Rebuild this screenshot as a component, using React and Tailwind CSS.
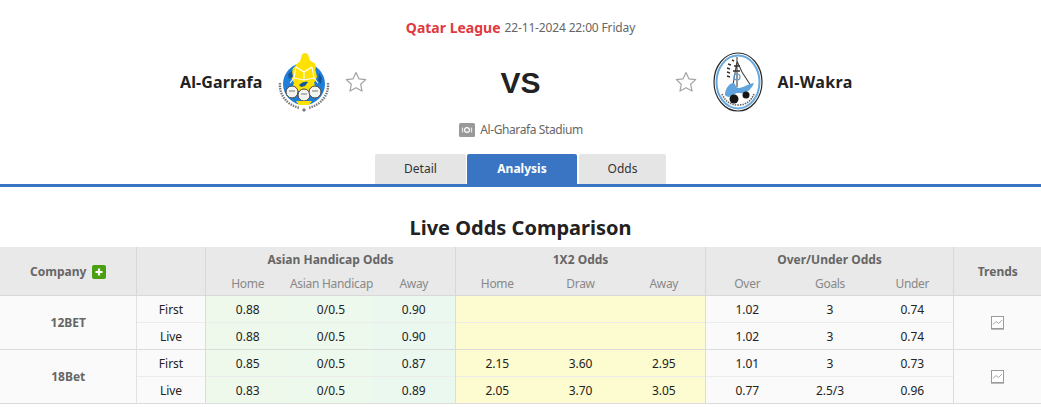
const font = { fontFamily: 'Tahoma, "Noto Sans", sans-serif' }

const rows = [
  {
    company: '12BET',
    lines: [
      { type: 'First', ah: ['0.88', '0/0.5', '0.90'], x12: ['', '', ''], ou: ['1.02', '3', '0.74'] },
      { type: 'Live', ah: ['0.88', '0/0.5', '0.90'], x12: ['', '', ''], ou: ['1.02', '3', '0.74'] },
    ],
  },
  {
    company: '18Bet',
    lines: [
      { type: 'First', ah: ['0.85', '0/0.5', '0.87'], x12: ['2.15', '3.60', '2.95'], ou: ['1.01', '3', '0.73'] },
      { type: 'Live', ah: ['0.83', '0/0.5', '0.89'], x12: ['2.05', '3.70', '3.05'], ou: ['0.77', '2.5/3', '0.96'] },
    ],
  },
]

function Star() {
  return (
    <svg width="22" height="22" viewBox="0 0 22 22" className="shrink-0">
      <path
        d="M11 1.500l2.900 6.300 6.800.8-5 4.700 1.300 6.800-6-3.400-6 3.400 1.300-6.800-5-4.700 6.800-.8z"
        fill="#fff"
        stroke="#a3a3a3"
        strokeWidth="1.2"
        strokeLinejoin="round"
      />
    </svg>
  )
}

function GarrafaLogo() {
  return (
    <svg width="52" height="62" viewBox="0 0 52 62" className="shrink-0">
      <circle cx="26" cy="33" r="21" fill="#1f7fd8" />
      <path d="M15 17l6-4h10l6 4 2 9-3 6 3 8H13l3-8-3-6z" fill="#fde100" />
      <path d="M24 3.500q3-3 6 0l2 6 5 3 1 5-10 1-12-1 2-4 4-3z" fill="#fde100" />
      <path d="M18 16l8 5 8-5M26 21v8M26 29l-10-2-4 5M26 29l10-2 4 5M16 27l2-11M36 27l-2-11" fill="none" stroke="#fff" strokeWidth="1.1" />
      <path d="M10 23l4-3 1 6-4 2zM41 22l3 5-1 6-3-3z" fill="#14559e" />
      <path d="M21 34c3-3 6-4 9-3l-3 4-4 1z" fill="#14559e" />
      <circle cx="14" cy="41" r="6" fill="#f4f4f0" stroke="#444" strokeWidth="1" />
      <circle cx="26" cy="44" r="6" fill="#f4f4f0" stroke="#444" strokeWidth="1" />
      <circle cx="37" cy="41" r="6" fill="#f4f4f0" stroke="#444" strokeWidth="1" />
      <path d="M11 40h6M23 43h6M34 40h6" stroke="#777" strokeWidth="1" />
      <path d="M2 32c-1 11 6 22 20 25M50 32c1 11-6 22-20 25" fill="none" stroke="#777" strokeWidth="2.400" strokeDasharray="1.5 1" />
      <path d="M18 50h16l-3 4H21z" fill="#fde100" />
      <path d="M26 57l2 2-2 2-2-2z" fill="#777" />
    </svg>
  )
}

function WakraLogo() {
  return (
    <svg width="50" height="60" viewBox="0 0 50 60" className="shrink-0">
      <ellipse cx="25" cy="30" rx="24" ry="29" fill="#fff" stroke="#2b2b2b" strokeWidth="1.2" />
      <ellipse cx="25" cy="30" rx="21.500" ry="26.500" fill="#fff" stroke="#69a8dc" strokeWidth="2" />
      <path d="M24 5v30M20 33l4-24 5 11 9 14" fill="none" stroke="#444" strokeWidth="1.1" />
      <path d="M15 12l3 1M14 16l3 1M14 20l3 1M14 24l3 1M19 8l2 1M21 14h6M20 19h7" stroke="#333" strokeWidth="1.4" />
      <circle cx="24" cy="25" r="3" fill="none" stroke="#5b9bd0" strokeWidth="1.2" />
      <path d="M12 43c0-5 3-11 8-12 3 0 2 5 6 5 4 0 8-4 15-5-1 3-5 9-10 10-4 1-7-1-9 1-3 2-6 5-10 1z" fill="#5fa4dc" />
      <circle cx="21" cy="47" r="4.500" fill="#161616" />
      <circle cx="33" cy="43" r="3.500" fill="#161616" />
      <path d="M9 42c3 7 8 11 16 11s13-4 16-11" fill="none" stroke="#666" strokeWidth="1.6" strokeDasharray="1.5 1" />
    </svg>
  )
}

function StadiumIcon() {
  return (
    <svg width="16" height="14" viewBox="0 0 16 14" className="shrink-0">
      <rect width="16" height="14" rx="1.500" fill="#999" />
      <circle cx="8" cy="7" r="2.400" fill="none" stroke="#fff" strokeWidth="1.2" />
      <path d="M3.500 4.500v5M12.500 4.500v5" stroke="#e6e6e6" strokeWidth="1.2" />
    </svg>
  )
}

function TrendIcon() {
  return (
    <svg width="13" height="14" viewBox="0 0 13 14" className="mx-auto block">
      <rect x="0.500" y="0.500" width="12" height="12" fill="#fff" stroke="#9a9a9a" />
      <path d="M0 13.500h13" stroke="#bbb" />
      <path d="M2 8.500l3-3 2.500 2L11 4" fill="none" stroke="#a9a3ad" strokeWidth="1" />
    </svg>
  )
}

function Team({ name, logo, reverse }) {
  return (
    <div className={`flex items-center ${reverse ? 'justify-start' : 'justify-end'}`}>
      {reverse ? (
        <>
          <Star />
          <div className="ml-[16px]">{logo}</div>
          <span className="ml-[15px] text-[16px] font-bold tracking-[0.4px] text-[#222]">{name}</span>
        </>
      ) : (
        <>
          <span className="mr-[15px] text-[16px] font-bold tracking-[0.1px] text-[#222]">{name}</span>
          <div className="mr-[15px]">{logo}</div>
          <Star />
        </>
      )}
    </div>
  )
}

export default function App() {
  return (
    <div className="h-[407px] w-[1041px] overflow-hidden bg-white text-[12px]" style={font}>
      <div className="flex h-[43px] items-end justify-center pb-[6px]">
        <span className="text-[14px] leading-[18px] font-bold text-[#e0393e]">Qatar League</span>
        <span className="ml-[4px] leading-[18px] tracking-[-0.15px] text-[#666]">22-11-2024 22:00 Friday</span>
      </div>

      <div className="grid h-[78px] grid-cols-[1fr_40px_1fr] items-center gap-[134px]">
        <Team name="Al-Garrafa" logo={<GarrafaLogo />} />
        <div className="text-center text-[30px] font-bold text-[#222]" style={{ fontFamily: '"Liberation Sans", sans-serif' }}>
          VS
        </div>
        <Team name="Al-Wakra" logo={<WakraLogo />} reverse />
      </div>

      <div className="flex h-[18px] items-center justify-center gap-[5px] pl-[1px] tracking-[-0.4px] text-[#666]">
        <StadiumIcon />
        <span>Al-Gharafa Stadium</span>
      </div>

      <div className="mt-[15px] flex h-[33px] justify-center border-b-[3px] border-[#3a75c4]">
        <div className="flex w-[91px] items-center justify-center rounded-t-[2px] bg-[#e5e5e5] text-[#333]">Detail</div>
        <div className="ml-[1px] flex w-[110px] items-center justify-center rounded-t-[2px] bg-[#3a75c4] font-bold text-white">Analysis</div>
        <div className="ml-[2px] flex w-[87px] items-center justify-center rounded-t-[2px] bg-[#e5e5e5] text-[#333]">Odds</div>
      </div>

      <h2 className="mt-[27px] h-[33px] text-center text-[20px] leading-[28px] font-bold text-[#222]">Live Odds Comparison</h2>

      <table className="w-[1041px] table-fixed border-collapse text-center [&_td]:pt-[2px] [&_td]:pl-[1px] [&_th]:pt-[2px] [&_th]:pl-[1px]">
        <colgroup>
          <col className="w-[136px]" />
          <col className="w-[69px]" />
          <col className="w-[84px]" />
          <col className="w-[83px]" />
          <col className="w-[83px]" />
          <col className="w-[83px]" />
          <col className="w-[84px]" />
          <col className="w-[83px]" />
          <col className="w-[83px]" />
          <col className="w-[83px]" />
          <col className="w-[82px]" />
          <col className="w-[88px]" />
        </colgroup>
        <thead className="bg-[#e9e9e9] font-bold text-[#666]">
          <tr className="h-[24px]">
            <th rowSpan={2} className="border-r border-b border-[#d8d8d8]">
              <span className="inline-flex items-center gap-[6px]">
                Company
                <span className="flex h-[14px] w-[14px] items-center justify-center rounded-[2px] bg-[#4a9f13]">
                  <svg width="10" height="10" viewBox="0 0 10 10">
                    <path d="M5 1.500v7M1.500 5h7" stroke="#fff" strokeWidth="2.2" />
                  </svg>
                </span>
              </span>
            </th>
            <th rowSpan={2} className="border-r border-b border-[#d8d8d8]" />
            <th colSpan={3} className="border-r border-[#d8d8d8]">Asian Handicap Odds</th>
            <th colSpan={3} className="border-r border-[#d8d8d8]">1X2 Odds</th>
            <th colSpan={3} className="border-r border-[#d8d8d8]">Over/Under Odds</th>
            <th rowSpan={2} className="border-b border-[#d8d8d8]">Trends</th>
          </tr>
          <tr className="h-[24px] border-b border-[#d8d8d8] font-normal tracking-[-0.3px] whitespace-nowrap text-[#888]">
            <td>Home</td>
            <td>Asian Handicap</td>
            <td className="border-r border-[#d8d8d8]">Away</td>
            <td>Home</td>
            <td>Draw</td>
            <td className="border-r border-[#d8d8d8]">Away</td>
            <td>Over</td>
            <td>Goals</td>
            <td className="border-r border-[#d8d8d8]">Under</td>
          </tr>
        </thead>
        <tbody className="text-[#222]">
          {rows.map((group) =>
            group.lines.map((line, i) => (
              <tr key={group.company + line.type} className={`h-[27px] border-b ${i === 0 ? 'border-[#ececec]' : 'border-[#dcdcdc]'}`}>
                {i === 0 ? (
                  <td rowSpan={2} className="border-r border-b border-r-[#e2e2e2] border-b-[#dcdcdc] bg-[#fafafa] font-bold text-[#666]">
                    {group.company}
                  </td>
                ) : null}
                <td className="border-r border-[#dcdcdc] bg-[#fafafa]">{line.type}</td>
                <td className="bg-[#eef9ec]">{line.ah[0]}</td>
                <td className="bg-[#eef9ee]">{line.ah[1]}</td>
                <td className="border-r border-r-[#dcdcdc] bg-[#ebf8f0]">{line.ah[2]}</td>
                <td className="bg-[#fdfbd0]">{line.x12[0]}</td>
                <td className="bg-[#fdfbd0]">{line.x12[1]}</td>
                <td className="border-r border-r-[#dcdcdc] bg-[#fdfbd0]">{line.x12[2]}</td>
                <td className="bg-[#fafafa]">{line.ou[0]}</td>
                <td className="bg-[#fafafa]">{line.ou[1]}</td>
                <td className="border-r border-r-[#dcdcdc] bg-[#fafafa]">{line.ou[2]}</td>
                {i === 0 ? (
                  <td rowSpan={2} className="border-b border-b-[#dcdcdc] bg-[#fafafa]">
                    <TrendIcon />
                  </td>
                ) : null}
              </tr>
            ))
          )}
        </tbody>
      </table>
    </div>
  )
}
